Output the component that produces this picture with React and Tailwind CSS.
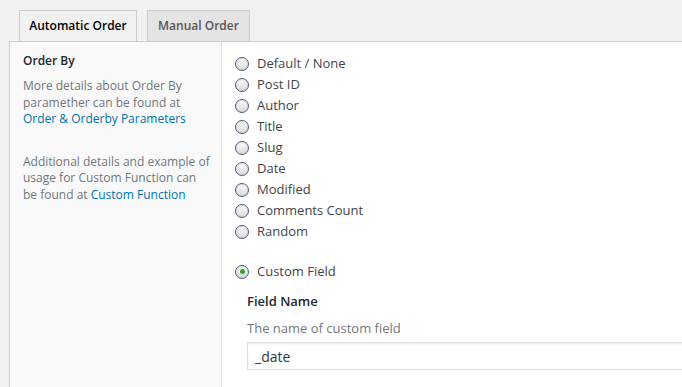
const options = [
  'Default / None',
  'Post ID',
  'Author',
  'Title',
  'Slug',
  'Date',
  'Modified',
  'Comments Count',
  'Random',
]

function Radio({ checked }) {
  return (
    <span className="relative w-[14px] h-[14px] rounded-full border border-[#4a5d80] bg-gradient-to-b from-white to-[#d8d8d8] shrink-0 flex items-center justify-center shadow-[inset_0_1px_2px_rgba(0,0,0,0.12)]">
      {checked && <span className="w-[5px] h-[5px] rounded-full bg-[#2fa52f]" />}
    </span>
  )
}

function Option({ label, checked }) {
  return (
    <label className="flex items-center h-[21px] gap-[8px]">
      <Radio checked={checked} />
      <span>{label}</span>
    </label>
  )
}

export default function App() {
  return (
    <div className="h-[387px] w-[682px] overflow-hidden bg-[#f1f1f1] text-[13px] text-[#444] font-['Open_Sans',sans-serif]">
      {/* tabs */}
      <div className="flex gap-[10px] pl-[19px] pt-[10px] text-[12px]">
        <div className="w-[118px] h-[31px] border border-b-0 border-[#ccc] bg-[#f1f1f1] flex items-center justify-center font-semibold text-[#000]">
          Automatic Order
        </div>
        <div className="w-[103px] h-[31px] border border-b-0 border-[#ccc] bg-[#e4e4e4] flex items-center justify-center font-semibold text-[#555]">
          Manual Order
        </div>
      </div>

      <div className="ml-[9px] w-[700px] h-[400px] border border-[#ccc] bg-white flex">
        {/* sidebar */}
        <div className="w-[212px] shrink-0 bg-[#f9f9f9] border-r border-[#e1e1e1] pl-[13px] pr-[10px] pt-[9px] text-[12px]">
          <p className="font-semibold text-[#23282d] leading-[20px]">Order By</p>
          <p className="mt-[7px] leading-[16.5px] text-[#72777c]">
            More details about Order By paramether can be found at{' '}
            <a className="text-[#0073aa]">Order &amp; Orderby Parameters</a>
          </p>
          <p className="mt-[26px] leading-[16.5px] text-[#72777c]">
            Additional details and example of usage for Custom Function can be found at{' '}
            <a className="text-[#0073aa]">Custom Function</a>
          </p>
        </div>

        {/* main */}
        <div className="flex-1 pl-[13px] pt-[11px]">
          {options.map(o => (
            <Option key={o} label={o} />
          ))}
          <div className="mt-[19px]">
            <Option label="Custom Field" checked />
          </div>
          <div className="pl-[12px] mt-[9px]">
            <p className="font-semibold text-[#23282d] leading-[20px]">Field Name</p>
            <p className="mt-[7px] leading-[20px] text-[#72777c]">The name of custom field</p>
            <div className="mt-[4px] h-[28px] border border-[#ddd] bg-white shadow-[inset_0_1px_2px_rgba(0,0,0,0.07)] pl-[7px] flex items-center text-[14px] text-[#32373c]">
              _date
            </div>
          </div>
        </div>
      </div>
    </div>
  )
}
